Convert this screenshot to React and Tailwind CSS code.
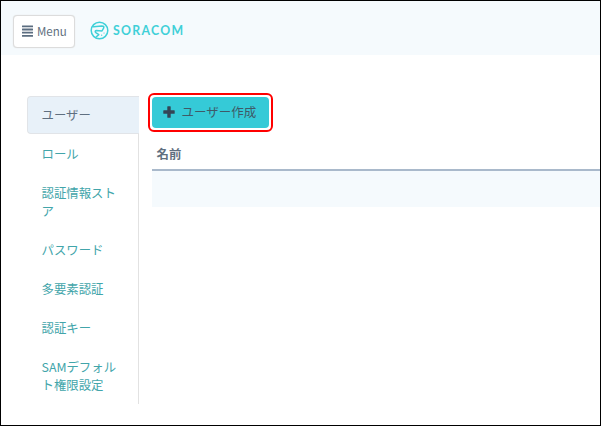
const navItems = [
  ['ロール'],
  ['認証情報スト', 'ア'],
  ['パスワード'],
  ['多要素認証'],
  ['認証キー'],
  ['SAMデフォル', 'ト権限設定'],
];

function MenuIcon() {
  return (
    <svg className="-mt-px h-3 w-[11px] shrink-0" viewBox="0 0 11 12" fill="#5b6d80">
      <rect y="0.4" width="11" height="1.8" rx="0.3" />
      <rect y="3.6" width="11" height="1.8" rx="0.3" />
      <rect y="6.8" width="11" height="1.8" rx="0.3" />
      <rect y="10" width="11" height="1.8" rx="0.3" />
    </svg>
  );
}

function Logo() {
  return (
    <div className="ml-[15px] flex items-center text-[#3fd0d8]">
      <svg className="h-[19px] w-[19px]" viewBox="0 0 19 19" fill="none" stroke="currentColor" strokeWidth="1.5">
        <circle cx="9.5" cy="9.5" r="8.3" />
        <path d="M3.6 5.8 L11.8 4.9 Q14.6 5 13.6 7.2 L12 10 L6.2 9.6 Q4.4 10 5.8 11.6 L8.8 13.6 L6.4 15.8" strokeLinecap="round" strokeLinejoin="round" />
        <path d="M14 12h.1M11.6 14.2h.1" strokeWidth="1.2" strokeLinecap="round" />
      </svg>
      <svg className="ml-[4px] h-[16px] w-[70px] overflow-visible" viewBox="0 0 70 16">
        <text x="0" y="12" fill="currentColor" fontFamily="Lato, sans-serif" fontWeight="700" fontSize="12.3" textLength="70">SORACOM</text>
      </svg>
    </div>
  );
}

export default function App() {
  return (
    <div className="flex h-[426px] w-[601px] flex-col overflow-hidden border border-black bg-white font-['Noto_Sans_CJK_JP',sans-serif] text-[12.4px] leading-[18px] text-[#5f6f80]">
      <header className="flex h-[54px] shrink-0 items-start bg-[#f5fafd] pl-3 pt-[14px]">
        <button className="flex h-[33px] w-[62px] items-center gap-1 rounded-[4px] border border-[#dcdcdc] bg-white pl-[8px] shadow-[0_0_1px_#d8d8d8]">
          <MenuIcon />
          <span className="-mt-px text-[11.5px]">Menu</span>
        </button>
        <div className="-mt-px flex h-[33px] items-center">
          <Logo />
        </div>
      </header>
      <div className="flex pl-[26px] pt-[41px]">
        <nav className="w-[112px] shrink-0">
          <div className="flex h-[38px] items-center rounded-l-[4px] border border-r-0 border-[#e1e4e8] bg-[#e8f1f9] pl-[13.5px]">ユーザー</div>
          <ul className="border-r border-[#e2e2e2] text-[#42a5aa]">
            {navItems.map((lines) => (
              <li key={lines[0]} className="whitespace-nowrap py-[10.5px] pl-[14.5px]">
                {lines.map((line) => (
                  <div key={line}>{line}</div>
                ))}
              </li>
            ))}
          </ul>
        </nav>
        <main className="min-w-0 flex-1 pl-[9px]">
          <div className="-mt-[3px] h-[39px] w-[125px] rounded-[6px] border-2 border-[#ff0000] p-[2px]">
            <button className="flex h-full w-[117px] items-center rounded-[4px] bg-[#35cad7] pl-[11px] text-[#3f5a68]">
              <svg className="-mt-px h-[12px] w-[12px]" viewBox="0 0 12 12" fill="#344556">
                <path d="M4.8 0.3h2.4q.5 0 .5.5v3.5h3.5q.5 0 .5.5v2.4q0 .5-.5.5H7.7v3.5q0 .5-.5.5H4.8q-.5 0-.5-.5V7.7H.8q-.5 0-.5-.5V4.8q0-.5.5-.5h3.5V.8q0-.5.5-.5z" />
              </svg>
              <span className="-mt-px ml-[6.5px] whitespace-nowrap text-[12.5px]">ユーザー作成</span>
            </button>
          </div>
          <table className="ml-[4px] w-[448px] border-collapse">
            <thead>
              <tr className="h-[38px] border-b-2 border-[#a9b9cb]">
                <th className="pl-[4.5px] pt-[6px] text-left align-middle font-bold">名前</th>
              </tr>
            </thead>
            <tbody>
              <tr className="h-[37px] bg-[#f5fafd]">
                <td />
              </tr>
            </tbody>
          </table>
        </main>
      </div>
    </div>
  );
}
